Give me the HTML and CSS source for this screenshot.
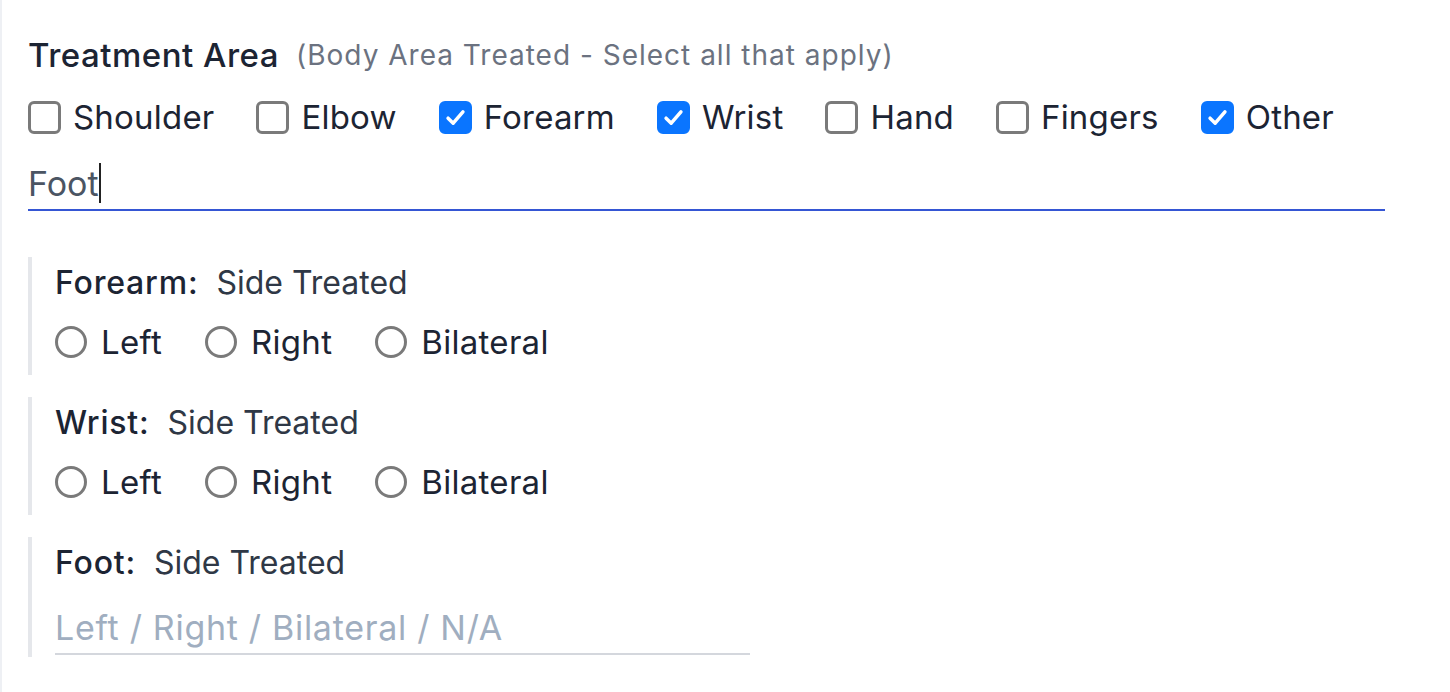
FILE: index.html
```html
<!DOCTYPE html>
<html lang="en">
<head>
<meta charset="utf-8">
<title>Treatment Area</title>
<link rel="stylesheet" href="styles.css">
</head>
<body>
<div class="page">
  <section class="field">
    <div class="field-head">
      <span class="field-title">Treatment Area</span>
      <span class="field-hint">(Body Area Treated - Select all that apply)</span>
    </div>
    <div class="check-row">
      <label class="opt"><span class="box"></span><span>Shoulder</span></label>
      <label class="opt"><span class="box"></span><span>Elbow</span></label>
      <label class="opt"><span class="box checked"><svg viewBox="0 0 20 20"><path d="M4.5 10.5 L8.3 14.2 L15.5 5.8" fill="none" stroke="#fff" stroke-width="2.6" stroke-linecap="round" stroke-linejoin="round"/></svg></span><span>Forearm</span></label>
      <label class="opt"><span class="box checked"><svg viewBox="0 0 20 20"><path d="M4.5 10.5 L8.3 14.2 L15.5 5.8" fill="none" stroke="#fff" stroke-width="2.6" stroke-linecap="round" stroke-linejoin="round"/></svg></span><span>Wrist</span></label>
      <label class="opt"><span class="box"></span><span>Hand</span></label>
      <label class="opt"><span class="box"></span><span>Fingers</span></label>
      <label class="opt"><span class="box checked"><svg viewBox="0 0 20 20"><path d="M4.5 10.5 L8.3 14.2 L15.5 5.8" fill="none" stroke="#fff" stroke-width="2.6" stroke-linecap="round" stroke-linejoin="round"/></svg></span><span>Other</span></label>
    </div>
    <div class="text-input focused"><span class="value">Foot</span><span class="caret"></span></div>
  </section>

  <div class="side-block">
    <div class="side-title"><span class="side-name">Forearm:</span><span class="side-sub">Side Treated</span></div>
    <div class="radio-row">
      <label class="opt radio-opt"><span class="radio"></span><span>Left</span></label>
      <label class="opt radio-opt"><span class="radio"></span><span>Right</span></label>
      <label class="opt radio-opt"><span class="radio"></span><span>Bilateral</span></label>
    </div>
  </div>

  <div class="side-block">
    <div class="side-title"><span class="side-name">Wrist:</span><span class="side-sub">Side Treated</span></div>
    <div class="radio-row">
      <label class="opt radio-opt"><span class="radio"></span><span>Left</span></label>
      <label class="opt radio-opt"><span class="radio"></span><span>Right</span></label>
      <label class="opt radio-opt"><span class="radio"></span><span>Bilateral</span></label>
    </div>
  </div>

  <div class="side-block last">
    <div class="side-title"><span class="side-name">Foot:</span><span class="side-sub">Side Treated</span></div>
    <div class="text-input small"><span class="placeholder">Left / Right / Bilateral / N/A</span></div>
  </div>
</div>
</body>
</html>
```

FILE: styles.css
```css
html, body {
  margin: 0;
  padding: 0;
  background: #ffffff;
}

body {
  font-family: Inter, "Noto Sans", "Liberation Sans", sans-serif;
  color: #1c2433;
  width: 1450px;
  height: 692px;
  overflow: hidden;
}

.page {
  box-sizing: border-box;
  height: 692px;
  border-left: 2px solid #eef0f4;
  padding: 35px 0 0 26px;
}

.field {
  width: 1357px;
}

.field-head {
  display: flex;
  align-items: center;
  gap: 17px;
  height: 40px;
  line-height: 40px;
}

.field-title {
  font-size: 33px;
  font-weight: 500;
  color: #1c2433;
  letter-spacing: 0.5px;
}

.field-hint {
  font-size: 28px;
  color: #6b7280;
  letter-spacing: 1px;
}

.check-row {
  display: flex;
  align-items: center;
  gap: 42px;
  margin-top: 22px;
  height: 40px;
}

.opt {
  display: flex;
  align-items: center;
  gap: 12px;
  font-size: 33px;
  letter-spacing: 0.2px;
  line-height: 40px;
  color: #1c2433;
}

.box {
  box-sizing: border-box;
  width: 33px;
  height: 33px;
  border: 3px solid #7a7a7a;
  border-radius: 6px;
  display: flex;
  align-items: center;
  justify-content: center;
  flex: none;
}

.box.checked {
  background: #0a75ff;
  border-color: #0a75ff;
}

.box svg {
  width: 27px;
  height: 27px;
}

.text-input {
  box-sizing: border-box;
  display: flex;
  align-items: center;
  height: 54px;
  border-bottom: 2px solid #d4d7dd;
}

.text-input.focused {
  margin-top: 20px;
  border-bottom-color: #3556d4;
  color: #4b5563;
  font-size: 34px;
}

.caret {
  display: inline-block;
  width: 2px;
  height: 40px;
  background: #222;
}

.side-block {
  box-sizing: border-box;
  margin-top: 46px;
  border-left: 4px solid #e5e7eb;
  padding: 5px 0 13px 23px;
  height: 118px;
}

.side-block + .side-block {
  margin-top: 22px;
}

.side-block.last {
  height: 120px;
  padding-bottom: 1px;
}

.side-title {
  display: flex;
  align-items: center;
  gap: 18px;
  height: 40px;
  font-size: 32px;
}

.side-name {
  font-weight: 500;
  color: #1c2433;
  letter-spacing: 0.8px;
}

.side-sub {
  color: #2f3846;
}

.radio-row {
  display: flex;
  align-items: center;
  gap: 43px;
  margin-top: 20px;
  height: 40px;
}

.radio-opt {
  gap: 14px;
  letter-spacing: 0.3px;
}

.radio {
  box-sizing: border-box;
  width: 32px;
  height: 32px;
  border: 3px solid #7a7a7a;
  border-radius: 50%;
  flex: none;
}

.text-input.small {
  margin-top: 19px;
  width: 695px;
  height: 54px;
  font-size: 34px;
}

.placeholder {
  color: #a0aec0;
  letter-spacing: 0.7px;
}
```
